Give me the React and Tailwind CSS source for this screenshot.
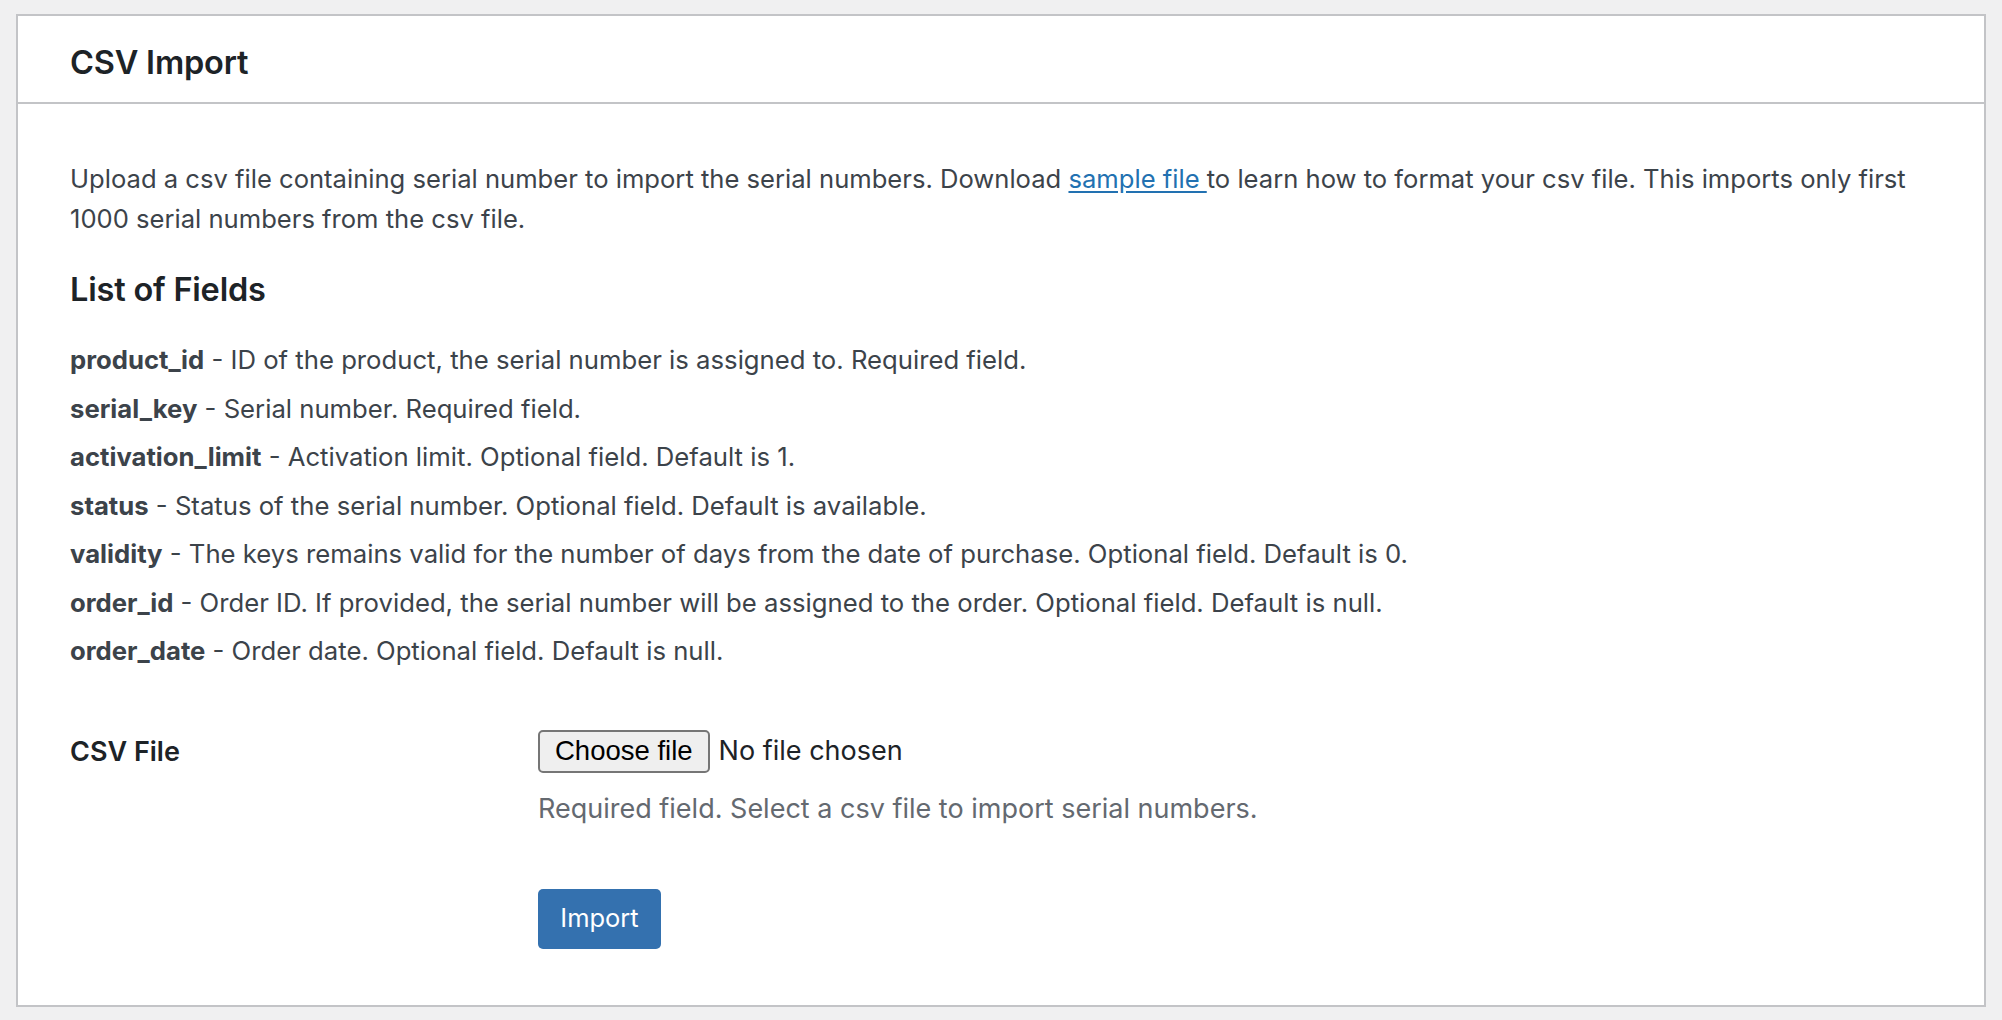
import React from "react";

// Definisi medan untuk fail CSV
const senaraiMedan = [
  { nama: "product_id", huraian: "ID of the product, the serial number is assigned to. Required field." },
  { nama: "serial_key", huraian: "Serial number. Required field." },
  { nama: "activation_limit", huraian: "Activation limit. Optional field. Default is 1." },
  { nama: "status", huraian: "Status of the serial number. Optional field. Default is available." },
  { nama: "validity", huraian: "The keys remains valid for the number of days from the date of purchase. Optional field. Default is 0." },
  { nama: "order_id", huraian: "Order ID. If provided, the serial number will be assigned to the order. Optional field. Default is null." },
  { nama: "order_date", huraian: "Order date. Optional field. Default is null." },
];

export default function App() {
  return (
    <div className="min-h-screen bg-[#f0f0f1] pt-[14px] px-4 pb-3 font-['Inter',sans-serif] text-[#3c434a]">
      <div className="bg-white border-2 border-[#c3c4c7]">
        {/* HEADER */}
        <div className="h-[88px] flex items-center px-[52px] pt-[8px] border-b-2 border-[#c3c4c7]">
          <h2 className="text-[32.5px] font-semibold text-[#1d2327] tracking-[-0.2px]">CSV Import</h2>
        </div>

        {/* BADAN */}
        <div className="px-[52px] pt-[55px] pb-[56px]">
          <p className="text-[25.6px] leading-[40px]">
            Upload a csv file containing serial number to import the serial numbers. Download{" "}
            <a href="#" className="text-[#2271b1] underline underline-offset-[3px]">sample file </a>
            to learn how to format your csv file. This imports only first 1000 serial numbers from the csv file.
          </p>

          <h3 className="mt-[33px] text-[32.5px] leading-[36px] font-semibold text-[#1d2327] tracking-[-0.2px]">List of Fields</h3>

          <div className="mt-[28px] flex flex-col">
            {senaraiMedan.map((m) => (
              <div key={m.nama} className="text-[25.7px] leading-[48.5px]">
                <strong className="font-bold">{m.nama}</strong> - {m.huraian}
              </div>
            ))}
          </div>

          {/* BORANG */}
          <div className="mt-[54px] flex">
            <div className="w-[468px] shrink-0 pt-[5px] text-[27px] leading-[34px] font-semibold text-[#1d2327]">CSV File</div>
            <div className="flex flex-col">
              <div className="flex items-center gap-[9px]">
                <button className="h-[43px] px-[15px] font-['Liberation_Sans',sans-serif] text-[27.5px] text-black bg-[#efefef] border-2 border-[#767676] rounded-[5px] leading-none">
                  Choose file
                </button>
                <span className="text-[27px] text-[#1d2327]">No file chosen</span>
              </div>
              <p className="mt-[20px] text-[27px] leading-[32px] text-[#646970]">
                Required field. Select a csv file to import serial numbers.
              </p>
              <div className="mt-[64px]">
                <button className="h-[60px] w-[123px] bg-[#3471af] text-white text-[25.5px] rounded-[5px]">
                  Import
                </button>
              </div>
            </div>
          </div>
        </div>
      </div>
    </div>
  );
}
